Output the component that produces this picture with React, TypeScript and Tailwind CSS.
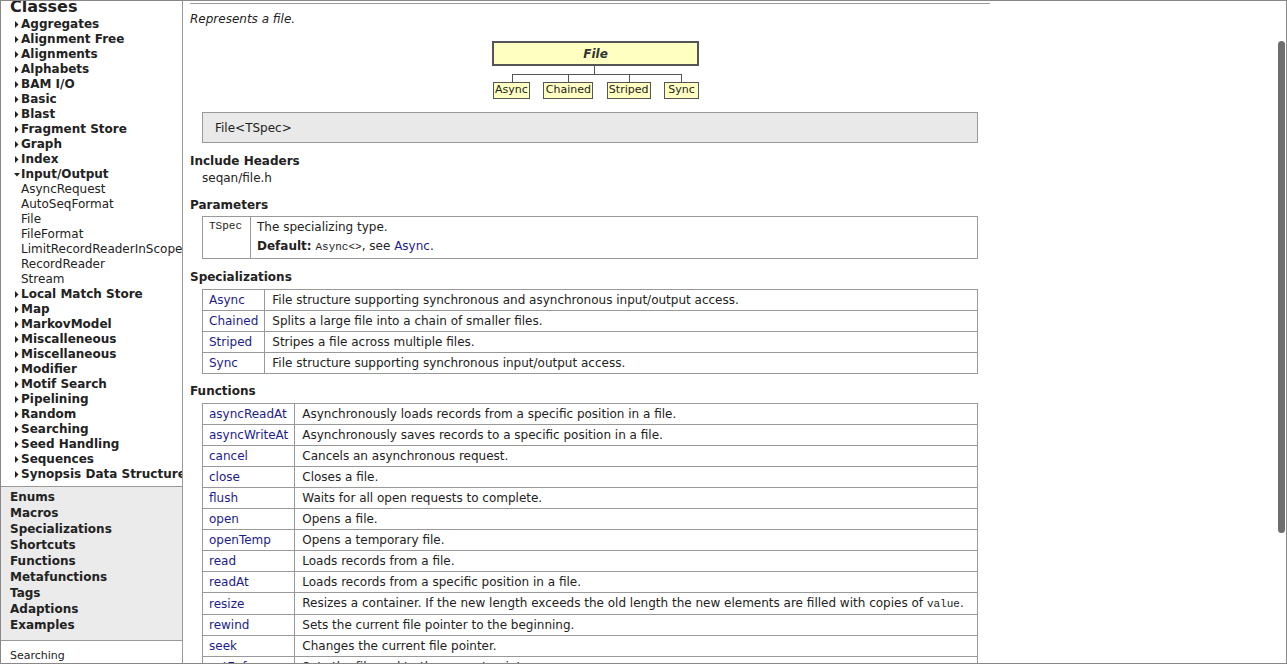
import React from "react";

const groups = [
  "Aggregates",
  "Alignment Free",
  "Alignments",
  "Alphabets",
  "BAM I/O",
  "Basic",
  "Blast",
  "Fragment Store",
  "Graph",
  "Index",
];
const ioItems = ["AsyncRequest", "AutoSeqFormat", "File", "FileFormat", "LimitRecordReaderInScope", "RecordReader", "Stream"];
const groups2 = [
  "Local Match Store",
  "Map",
  "MarkovModel",
  "Miscalleneous",
  "Miscellaneous",
  "Modifier",
  "Motif Search",
  "Pipelining",
  "Random",
  "Searching",
  "Seed Handling",
  "Sequences",
  "Synopsis Data Structure",
];
const kinds = ["Enums", "Macros", "Specializations", "Shortcuts", "Functions", "Metafunctions", "Tags", "Adaptions", "Examples"];

const specs = [
  ["Async", "File structure supporting synchronous and asynchronous input/output access."],
  ["Chained", "Splits a large file into a chain of smaller files."],
  ["Striped", "Stripes a file across multiple files."],
  ["Sync", "File structure supporting synchronous input/output access."],
];

const funcs = [
  ["asyncReadAt", "Asynchronously loads records from a specific position in a file."],
  ["asyncWriteAt", "Asynchronously saves records to a specific position in a file."],
  ["cancel", "Cancels an asynchronous request."],
  ["close", "Closes a file."],
  ["flush", "Waits for all open requests to complete."],
  ["open", "Opens a file."],
  ["openTemp", "Opens a temporary file."],
  ["read", "Loads records from a file."],
  ["readAt", "Loads records from a specific position in a file."],
  ["resize", "RESIZE"],
  ["rewind", "Sets the current file pointer to the beginning."],
  ["seek", "Changes the current file pointer."],
  ["setEof", "Sets the file end to the current pointer."],
];

function Arrow({ open }: { open?: boolean }) {
  if (open)
    return (
      <svg width="6" height="7" viewBox="0 0 6 7" className="mr-[1px] shrink-0">
        <path d="M0 2 L6 2 L3 5.5 Z" fill="#222" />
      </svg>
    );
  return (
    <svg width="6" height="7" viewBox="0 0 6 7" className="mr-[1px] shrink-0">
      <path d="M1 0 L4.5 3.5 L1 7 Z" fill="#222" />
    </svg>
  );
}

function Sidebar() {
  return (
    <div className="w-[182px] shrink-0 border-r border-[#999] flex flex-col overflow-hidden">
      <div className="pl-[13px] -mt-[5px] pb-[4px]">
        <div className="-ml-[4px] text-[16px] font-bold leading-[21px] text-[#222]">Classes</div>
        <ul className="text-[12px] leading-[15px] text-[#222]">
          {groups.map((g) => (
            <li key={g} className="flex items-center font-bold whitespace-nowrap">
              <Arrow />
              {g}
            </li>
          ))}
          <li className="flex items-center font-bold whitespace-nowrap">
            <Arrow open />
            Input/Output
          </li>
          {ioItems.map((g) => (
            <li key={g} className="pl-[7px] whitespace-nowrap">
              {g}
            </li>
          ))}
          {groups2.map((g) => (
            <li key={g} className="flex items-center font-bold whitespace-nowrap">
              <Arrow />
              {g}
            </li>
          ))}
        </ul>
      </div>
      <div className="bg-[#ebebeb] border-y border-[#999] pl-[9px] pt-[2px] h-[158px]">
        {kinds.map((k) => (
          <div key={k} className="text-[12px] font-bold leading-[16px] text-[#222]">
            {k}
          </div>
        ))}
      </div>
      <div className="pl-[9px] pt-[8px] text-[11px] leading-[14px] text-[#222]">Searching</div>
    </div>
  );
}

function Heading({ children, className }: { children: React.ReactNode; className?: string }) {
  return <div className={"text-[12px] font-bold leading-[16px] text-[#222] " + (className ?? "")}>{children}</div>;
}

function Diagram() {
  const kids = [
    { name: "Async", w: "w-[37px]" },
    { name: "Chained", w: "w-[50px]" },
    { name: "Striped", w: "w-[44px]" },
    { name: "Sync", w: "w-[35px]" },
  ];
  return (
    <div className="ml-[302px] mt-[14px] w-[207px] relative">
      <div className="h-[25px] border-2 border-[#555] bg-[#ffffc2] flex items-center justify-center text-[12px] font-bold italic text-[#333]">
        File
      </div>
      <div className="relative h-[16px]">
        <div className="absolute left-[102px] top-0 h-[9px] w-px bg-[#555]" />
        <div className="absolute left-[20px] right-[18px] top-[8px] h-px bg-[#555]" />
      </div>
      <div className="flex justify-between pl-px">
        {kids.map((k) => (
          <div key={k.name} className="relative">
            <div className="absolute left-1/2 -top-[8px] h-[8px] w-px bg-[#555]" />
            <div
              className={
                "h-[17px] border border-[#555] bg-[#ffffc2] flex items-center justify-center text-[11px] text-[#222] " + k.w
              }
            >
              {k.name}
            </div>
          </div>
        ))}
      </div>
    </div>
  );
}

function LinkTable({ rows, col }: { rows: string[][]; col: string }) {
  return (
    <table className="ml-[12px] w-[776px] border-collapse border border-[#999] text-[12px] text-[#222]">
      <tbody>
        {rows.map(([a, b]) => (
          <tr key={a} className="h-[21px]">
            <td className={"border border-[#999] px-[6px] py-0 leading-[20px] text-[#1c1c8c] whitespace-nowrap " + col}>{a}</td>
            <td className="border border-[#999] px-[7px] py-0 leading-[20px] whitespace-nowrap">
              {b === "RESIZE" ? (
                <>
                  Resizes a container. If the new length exceeds the old length the new elements are filled with copies of{" "}
                  <code className="font-['Liberation_Mono',monospace] text-[11px]">value</code>.
                </>
              ) : (
                b
              )}
            </td>
          </tr>
        ))}
      </tbody>
    </table>
  );
}

export default function App() {
  return (
    <div
      className="w-[1287px] h-[664px] border border-[#888] flex overflow-hidden relative bg-white"
      style={{ fontFamily: "'DejaVu Sans', Verdana, sans-serif" }}
    >
      <Sidebar />
      <div className="flex-1 pl-[7px] overflow-hidden">
        <div className="mt-[2px] w-[800px] h-px bg-[#999]" />
        <div className="mt-[7px] text-[12px] italic leading-[16px] text-[#222]">Represents a file.</div>
        <Diagram />
        <div className="ml-[12px] mt-[13px] w-[776px] h-[31px] border border-[#999] bg-[#e9e9e9] pl-[12px] flex items-center text-[12px] text-[#222]">
          File&lt;TSpec&gt;
        </div>
        <Heading className="mt-[10px]">Include Headers</Heading>
        <div className="ml-[12px] mt-px text-[12px] leading-[16px] text-[#222]">seqan/file.h</div>
        <Heading className="mt-[11px]">Parameters</Heading>
        <table className="ml-[12px] mt-[3px] w-[776px] border-collapse border border-[#999] text-[12px] text-[#222]">
          <tbody>
            <tr>
              <td className="w-[48px] border border-[#999] px-[6px] pt-[2px] align-top font-['Liberation_Mono',monospace] text-[11px] leading-[14px]">
                TSpec
              </td>
              <td className="border border-[#999] px-[6px] pt-px pb-px leading-[19px]">
                <div>The specializing type.</div>
                <div>
                  <b>Default:</b> <code className="font-['Liberation_Mono',monospace] text-[11px]">Async&lt;&gt;</code>, see{" "}
                  <span className="text-[#1c1c8c]">Async</span>.
                </div>
              </td>
            </tr>
          </tbody>
        </table>
        <Heading className="mt-[10px]">Specializations</Heading>
        <div className="mt-[4px]">
          <LinkTable rows={specs} col="w-[61px]" />
        </div>
        <Heading className="mt-[9px]">Functions</Heading>
        <div className="mt-[4px]">
          <LinkTable rows={funcs} col="w-[91px]" />
        </div>
      </div>
      <div className="absolute left-[1277px] top-[40px] w-[7px] h-[492px] rounded-full bg-[#6e6e6e]" />
    </div>
  );
}
